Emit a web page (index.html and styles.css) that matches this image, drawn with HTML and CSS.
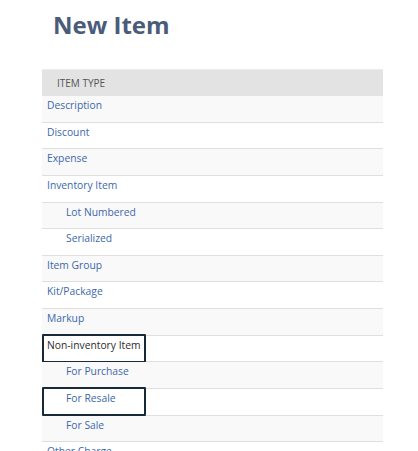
FILE: index.html
```html
<!DOCTYPE html>
<html>
<head>
<meta charset="utf-8">
<link rel="stylesheet" href="styles.css">
</head>
<body>
<h1 class="title">New Item</h1>
<div class="table">
  <div class="head">ITEM TYPE</div>
  <div class="row alt"><a>Description</a></div>
  <div class="row"><a>Discount</a></div>
  <div class="row alt"><a>Expense</a></div>
  <div class="row"><a>Inventory Item</a></div>
  <div class="row alt sub"><a>Lot Numbered</a></div>
  <div class="row sub"><a>Serialized</a></div>
  <div class="row alt"><a>Item Group</a></div>
  <div class="row"><a>Kit/Package</a></div>
  <div class="row alt"><a>Markup</a></div>
  <div class="row plain"><a>Non-inventory Item</a><span class="mark"></span></div>
  <div class="row alt sub"><a>For Purchase</a></div>
  <div class="row sub"><a>For Resale</a><span class="mark"></span></div>
  <div class="row alt sub"><a>For Sale</a></div>
  <div class="row"><a>Other Charge</a></div>
</div>
</body>
</html>
```

FILE: styles.css
```css
html, body {
  margin: 0;
  padding: 0;
  background: #fff;
  font-family: "Open Sans", "Liberation Sans", sans-serif;
}
.title {
  margin: 0;
  padding: 8px 0 0 53px;
  height: 69.3px;
  box-sizing: border-box;
  font-size: 24px;
  font-weight: 700;
  color: #4a5c7a;
  line-height: 34px;
}
.table {
  margin-left: 42px;
  width: 341px;
}
.head {
  height: 26.7px;
  box-sizing: border-box;
  background: #e3e3e3;
  border-top: 1px solid #ececec;
  padding-left: 15px;
  display: flex;
  align-items: center;
  font-size: 10px;
  color: #555;
}
.row {
  position: relative;
  height: 26.65px;
  box-sizing: border-box;
  border-bottom: 1px solid #dfdfdf;
  padding: 2px 0 0 5px;
  font-size: 10.3px;
  line-height: 15px;
  background: #fff;
}
.row.alt {
  background: #f9f9f9;
}
.row.sub {
  padding-left: 24px;
}
.row a {
  color: #3d67aa;
}
.row.plain a {
  color: #2b2b2b;
}
.mark {
  position: absolute;
  left: 0;
  top: -2px;
  width: 104px;
  height: 29px;
  box-sizing: border-box;
  border: 2px solid #182a38;
  border-radius: 1px;
}
```
